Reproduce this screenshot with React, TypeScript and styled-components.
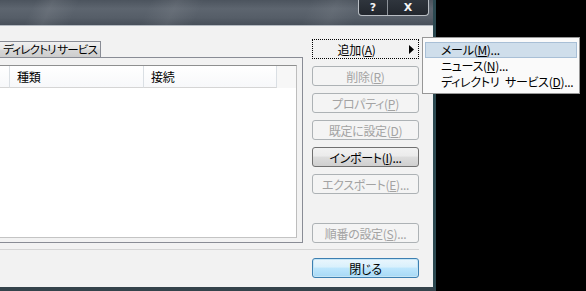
import styled, { createGlobalStyle } from "styled-components";

const GlobalStyle = createGlobalStyle`
  html, body {
    margin: 0;
    padding: 0;
    background: #000;
  }
  body {
    font-family: "Noto Sans CJK JP", "Noto Sans", sans-serif;
    font-size: 12px;
    font-feature-settings: "palt";
    letter-spacing: -0.3px;
  }
`;

interface ButtonSpec {
    label: string;
    key: string;
    tail?: string;
    kind: "normal" | "disabled";
}

const sideButtons: ButtonSpec[] = [
    { label: "削除", key: "R", kind: "disabled" },
    { label: "プロパティ", key: "P", kind: "disabled" },
    { label: "既定に設定", key: "D", kind: "disabled" },
    { label: "インポート", key: "I", tail: "...", kind: "normal" },
    { label: "エクスポート", key: "E", tail: "...", kind: "disabled" },
];

const menuItems = [
    { label: "メール", key: "M", active: true },
    { label: "ニュース", key: "N", active: false },
    { label: "ディレクトリ\u2002サービス", key: "D", active: false },
];

export default function App() {
    return (
        <Screen>
            <GlobalStyle />
            <Window>
                <TitleBar>
                    <CaptionButtons>
                        <CaptionButton $w={28}>?</CaptionButton>
                        <CaptionButton $w={41}>X</CaptionButton>
                    </CaptionButtons>
                </TitleBar>
                <Client>
                    <Main>
                        <TabArea>
                            <TabStrip>
                                <Tab>{"ディレクトリ\u2009サービス"}</Tab>
                            </TabStrip>
                            <TabPanel>
                                <ListView>
                                    <HeaderRow>
                                        <HeaderCell $w={10} />
                                        <HeaderCell $w={134}>種類</HeaderCell>
                                        <HeaderCell $w={133}>接続</HeaderCell>
                                    </HeaderRow>
                                </ListView>
                            </TabPanel>
                        </TabArea>
                        <ButtonColumn>
                            <AddButton>
                                <span>追加(<u>A</u>)</span>
                                <Arrow width="5" height="9" viewBox="0 0 5 9">
                                    <path d="M0 0 L5 4.5 L0 9 Z" fill="#000" />
                                </Arrow>
                            </AddButton>
                            {sideButtons.map((b) => (
                                <PushButton key={b.label} $kind={b.kind}>
                                    {b.label}(<u>{b.key}</u>){b.tail}
                                </PushButton>
                            ))}
                            <PushButton $kind="disabled" $last>
                                順番の設定(<u>S</u>)...
                            </PushButton>
                        </ButtonColumn>
                    </Main>
                    <Separator />
                    <Footer>
                        <DefaultButton>閉じる</DefaultButton>
                    </Footer>
                </Client>
            </Window>
            <PopupMenu>
                {menuItems.map((m) => (
                    <MenuItem key={m.label} $active={m.active}>
                        {m.label}(<u>{m.key}</u>)...
                    </MenuItem>
                ))}
            </PopupMenu>
        </Screen>
    );
}

const Screen = styled.div`
    position: relative;
    width: 586px;
    height: 291px;
    overflow: hidden;
    background: #000;
`;

const Window = styled.div`
    width: 436px;
    height: 291px;
    box-sizing: border-box;
    display: flex;
    flex-direction: column;
    border-right: 3px solid #2b4850;
    border-bottom: 4px solid #34434b;
    background: #f2f2f2;
`;

const TitleBar = styled.div`
    height: 25px;
    flex-shrink: 0;
    display: flex;
    justify-content: flex-end;
    align-items: flex-start;
    padding-right: 4px;
    border-bottom: 1px solid #b4bac1;
    background:
        linear-gradient(115deg, transparent 8%, rgba(255,255,255,0.08) 12%, transparent 18%,
            transparent 34%, rgba(255,255,255,0.07) 40%, transparent 46%,
            transparent 70%, rgba(255,255,255,0.06) 76%, transparent 82%),
        linear-gradient(to bottom, #4c545e 0%, #5d656f 35%, #565e68 70%, #48505a 100%);
`;

const CaptionButtons = styled.div`
    display: flex;
    height: 16px;
    box-sizing: border-box;
    border: 1px solid #b9bec4;
    border-top: none;
    border-radius: 0 0 4px 4px;
    overflow: hidden;
    background: linear-gradient(to bottom, #2f353d, #22272e);
`;

const CaptionButton = styled.div<{ $w: number }>`
    width: ${(p) => p.$w}px;
    height: 100%;
    display: flex;
    align-items: center;
    justify-content: center;
    color: #f4f4f4;
    font-family: "DejaVu Sans", sans-serif;
    font-weight: bold;
    font-size: 11px;
    letter-spacing: 0;
    box-sizing: border-box;
    & + & {
        border-left: 1px solid #8d939a;
    }
`;

const Client = styled.div`
    flex: 1;
    display: flex;
    flex-direction: column;
    background: #f2f2f2;
    color: #000;
`;

const Main = styled.div`
    height: 217px;
    display: flex;
`;

const TabArea = styled.div`
    width: 303px;
    display: flex;
    flex-direction: column;
    padding-top: 15px;
    box-sizing: border-box;
`;

const TabStrip = styled.div`
    height: 16px;
    display: flex;
`;

const Tab = styled.div`
    width: 101px;
    box-sizing: border-box;
    height: 16px;
    padding-left: 3px;
    font-size: 11.5px;
    line-height: 15px;
    letter-spacing: -0.8px;
    white-space: nowrap;
    border: 1px solid #898c95;
    border-left: none;
    border-bottom: none;
    background: linear-gradient(to bottom, #f0f0f0 0%, #e5e5e5 45%, #d6d6d6 55%, #cdcdcd 100%);
`;

const TabPanel = styled.div`
    flex: 1;
    display: flex;
    box-sizing: border-box;
    padding: 7px 5px 4px 0;
    border: 1px solid #898c95;
    border-left: none;
`;

const ListView = styled.div`
    flex: 1;
    background: #fff;
    border: 1px solid #c4c4c4;
    border-left: none;
    border-right-color: #bdbdbd;
    border-top-color: #8e8f8f;
`;

const HeaderRow = styled.div`
    display: flex;
    height: 22px;
    background: #f7f7f7;
`;

const HeaderCell = styled.div<{ $w: number }>`
    width: ${(p) => p.$w}px;
    box-sizing: border-box;
    padding-left: 7px;
    line-height: 21px;
    border-right: 1px solid #dadfe4;
    border-bottom: 1px solid #d5d5d5;
    background: linear-gradient(to bottom, #ffffff, #f7f8fa);
`;

const ButtonColumn = styled.div`
    width: 107px;
    margin-left: 9px;
    padding-top: 13px;
    display: flex;
    flex-direction: column;
    gap: 7px;
`;

const ButtonBase = styled.div`
    height: 20px;
    box-sizing: border-box;
    display: flex;
    align-items: center;
    justify-content: center;
    white-space: nowrap;
    border-radius: 3px;
    font-size: 12px;
`;

const AddButton = styled(ButtonBase)`
    position: relative;
    border-radius: 0;
    border: 1px dotted #000;
    padding-right: 18px;
    background: #f2f2f2;
`;

const Arrow = styled.svg`
    position: absolute;
    right: 4px;
    top: 5px;
`;

const PushButton = styled(ButtonBase)<{ $kind: "normal" | "disabled"; $last?: boolean }>`
    margin-top: ${(p) => (p.$last ? "auto" : "0")};
    ${(p) =>
        p.$kind === "disabled"
            ? `
        color: #a3a3a3;
        border: 1px solid #adb2b5;
        background: #f4f4f4;
    `
            : `
        color: #000;
        border: 1px solid #707070;
        background: linear-gradient(to bottom, #f2f2f2 0%, #ebebeb 45%, #dddddd 50%, #cfcfcf 100%);
    `}
`;

const Separator = styled.div`
    height: 1px;
    margin: 6px 14px 0 0;
    background: #d5d5d5;
`;

const Footer = styled.div`
    display: flex;
    justify-content: flex-end;
    padding: 8px 14px 0 0;
`;

const DefaultButton = styled(ButtonBase)`
    width: 107px;
    border: 1px solid #3c7fb1;
    background: linear-gradient(to bottom, #eaf6fd 0%, #d9f0fc 45%, #bee6fd 50%, #a7d9f5 100%);
    box-shadow: inset 0 0 0 1px #c4e5f6;
`;

const PopupMenu = styled.div`
    position: absolute;
    left: 422px;
    top: 37px;
    width: 158px;
    height: 57px;
    box-sizing: border-box;
    padding: 4px 2px 0 2px;
    background: #fafafa;
    border: 1px solid #979797;
`;

const MenuItem = styled.div<{ $active: boolean }>`
    height: 16px;
    box-sizing: border-box;
    padding-left: 15px;
    line-height: 14px;
    white-space: nowrap;
    border: 1px solid ${(p) => (p.$active ? "#a8bfd6" : "transparent")};
    background: ${(p) => (p.$active ? "#cfdeeb" : "transparent")};
`;
